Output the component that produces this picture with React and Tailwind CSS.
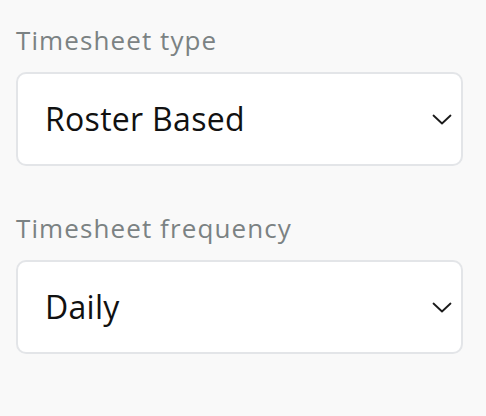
import React from "react";

const fields = [
  { label: "Timesheet type", value: "Roster Based" },
  { label: "Timesheet frequency", value: "Daily" },
];

const Chevron = () => (
  <svg width="20" height="11" viewBox="0 0 20 11" fill="none">
    <path d="M1.5 1.5 10 9.5 18.5 1.5" stroke="#1a1a1a" strokeWidth="1.8" strokeLinecap="round" strokeLinejoin="round" />
  </svg>
);

const SelectField = ({ label, value }) => (
  <div className="flex flex-col">
    <label className="text-[26px] leading-[26px] tracking-[1.1px] text-[#7b8283]">{label}</label>
    <div className="mt-[19px] flex h-[94px] items-center justify-between rounded-[10px] border-2 border-[#e3e5e8] bg-white pl-[27px] pr-[9px]">
      <span className="text-[32px] tracking-[0.3px] text-[#111111]">{value}</span>
      <Chevron />
    </div>
  </div>
);

export default function App() {
  return (
    <div
      className="min-h-[416px] w-full bg-[#f9f9f9] px-4 pt-[27px]"
      style={{ fontFamily: '"Open Sans", "Noto Sans", sans-serif' }}
    >
      <div className="flex w-[447px] flex-col gap-[49px]">
        {fields.map((f) => (
          <SelectField key={f.label} label={f.label} value={f.value} />
        ))}
      </div>
    </div>
  );
}
